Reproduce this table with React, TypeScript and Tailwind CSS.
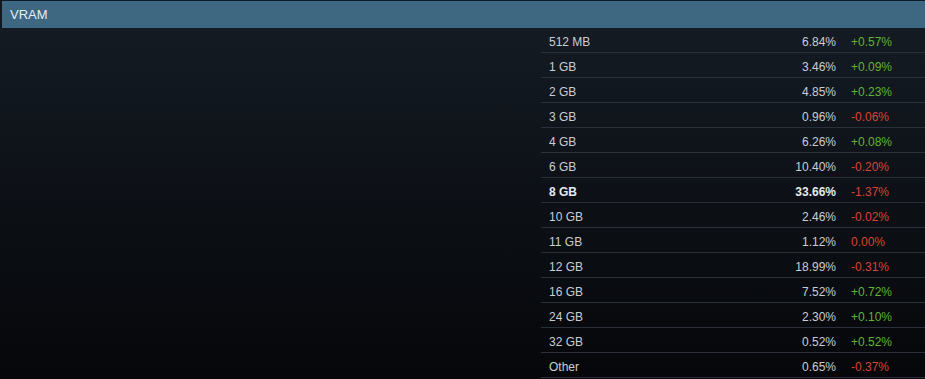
const rows = [
  { label: "512 MB", pct: "6.84%", change: "+0.57%" },
  { label: "1 GB", pct: "3.46%", change: "+0.09%" },
  { label: "2 GB", pct: "4.85%", change: "+0.23%" },
  { label: "3 GB", pct: "0.96%", change: "-0.06%" },
  { label: "4 GB", pct: "6.26%", change: "+0.08%" },
  { label: "6 GB", pct: "10.40%", change: "-0.20%" },
  { label: "8 GB", pct: "33.66%", change: "-1.37%", bold: true },
  { label: "10 GB", pct: "2.46%", change: "-0.02%" },
  { label: "11 GB", pct: "1.12%", change: "0.00%" },
  { label: "12 GB", pct: "18.99%", change: "-0.31%" },
  { label: "16 GB", pct: "7.52%", change: "+0.72%" },
  { label: "24 GB", pct: "2.30%", change: "+0.10%" },
  { label: "32 GB", pct: "0.52%", change: "+0.52%" },
  { label: "Other", pct: "0.65%", change: "-0.37%" },
];

export default function App() {
  return (
    <div
      className="w-[925px] h-[379px] overflow-hidden bg-[#0b0e13] text-[12px]"
      style={{ fontFamily: '"Liberation Sans", Arial, sans-serif' }}
    >
      <div className="border-t border-[#0d1a2a] pl-[2px] bg-[#121820]">
        <div className="h-[27px] bg-[#3e6781] flex items-center pl-[8px] text-[13px] text-[#e4edf3]">
          VRAM
        </div>
      </div>
      <div className="flex h-[351px] bg-gradient-to-b from-[#141b23] to-[#06070a]">
        <div className="w-[541px] shrink-0" />
        <div className="flex-1 flex flex-col">
          {rows.map((row) => (
            <div
              key={row.label}
              className={`h-[25px] shrink-0 flex items-center pt-[4px] border-b border-[#2a3039] ${
                row.bold ? "font-bold text-[#e6e9ec]" : "text-[#c9ced3]"
              }`}
            >
              <div className="pl-[8px] flex-1">{row.label}</div>
              <div className="w-[80px] text-right">{row.pct}</div>
              <div
                className={`pl-[15px] w-[89px] font-normal ${
                  row.change.startsWith("+") ? "text-[#5fb52f]" : "text-[#d9432f]"
                }`}
              >
                {row.change}
              </div>
            </div>
          ))}
        </div>
      </div>
    </div>
  );
}
